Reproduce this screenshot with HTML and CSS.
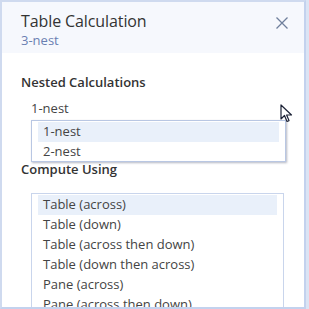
FILE: index.html
```html
<!DOCTYPE html>
<html>
<head>
<meta charset="utf-8">
<link rel="stylesheet" href="styles.css">
</head>
<body>
<div class="panel">
  <div class="header">
    <div class="titles">
      <div class="title">Table Calculation</div>
      <div class="subtitle">3-nest</div>
    </div>
    <svg class="close" width="12" height="12" viewBox="0 0 12 12"><path d="M0.5 0.5 L11.5 11.5 M11.5 0.5 L0.5 11.5" stroke="#6f7f9c" stroke-width="1.3" fill="none"/></svg>
  </div>
  <div class="body">
    <div class="label label-nested">Nested Calculations</div>
    <div class="select">1-nest</div>
    <div class="label label-compute">Compute Using</div>
    <div class="listbox">
      <div class="item selected">Table (across)</div>
      <div class="item">Table (down)</div>
      <div class="item">Table (across then down)</div>
      <div class="item">Table (down then across)</div>
      <div class="item">Pane (across)</div>
      <div class="item">Pane (across then down)</div>
    </div>
    <div class="dropdown">
      <div class="item selected">1-nest</div>
      <div class="item">2-nest</div>
    </div>
    <svg class="cursor" width="13" height="20" viewBox="0 0 13 20"><path d="M1 1 L1 15 L4.5 11.5 L7 17.5 L9 16.6 L6.6 11 L11.5 11 Z" fill="#ffffff" stroke="#1c2236" stroke-width="1.2" stroke-linejoin="round"/></svg>
  </div>
</div>
</body>
</html>
```

FILE: styles.css
```css
html, body {
  margin: 0;
  padding: 0;
}
body {
  width: 309px;
  height: 309px;
  overflow: hidden;
  background: #dbe4f4;
  font-family: "Open Sans", "Noto Sans", sans-serif;
}
.panel {
  width: 302px;
  height: 305px;
  border-top: 2px solid #cfdaef;
  border-left: 2px solid #cfdaef;
  border-bottom: 2px solid #c3d2ee;
  border-right: 2px solid #c3d2ee;
  background: #ffffff;
  position: relative;
  overflow: hidden;
}
.header {
  height: 51px;
  background: #f6f8fd;
  display: flex;
  justify-content: space-between;
  align-items: flex-start;
  padding: 8px 16px 0 19px;
  box-sizing: border-box;
}
.title {
  font-size: 16px;
  color: #333333;
  line-height: 22px;
  letter-spacing: -0.1px;
}
.subtitle {
  font-size: 13px;
  color: #6a7fb2;
  line-height: 17px;
}
.close {
  margin-top: 7px;
}
.body {
  position: relative;
  padding: 20px 0 0 19px;
}
.label {
  font-size: 13px;
  font-weight: 600;
  color: #333333;
  line-height: 18px;
}
.select {
  font-size: 13px;
  color: #444444;
  margin: 8px 0 0 10px;
  line-height: 18px;
}
.label-compute {
  margin-top: 43px;
}
.listbox {
  margin: 15px 0 0 10px;
  width: 253px;
  height: 140px;
  border: 1px solid #c9d5ec;
  padding: 1px 6px;
  box-sizing: border-box;
}
.item {
  font-size: 13px;
  color: #444444;
  height: 20px;
  line-height: 19px;
  padding-left: 5px;
}
.item.selected {
  background: #e9f0fa;
}
.dropdown {
  position: absolute;
  left: 29px;
  top: 67px;
  width: 255px;
  height: 42px;
  box-sizing: border-box;
  border: 1px solid #b9c7e3;
  background: #ffffff;
  box-shadow: 1px 1px 2px rgba(40, 50, 80, 0.35);
  padding: 1px 6px;
}
.cursor {
  position: absolute;
  left: 278px;
  top: 51px;
}
```
